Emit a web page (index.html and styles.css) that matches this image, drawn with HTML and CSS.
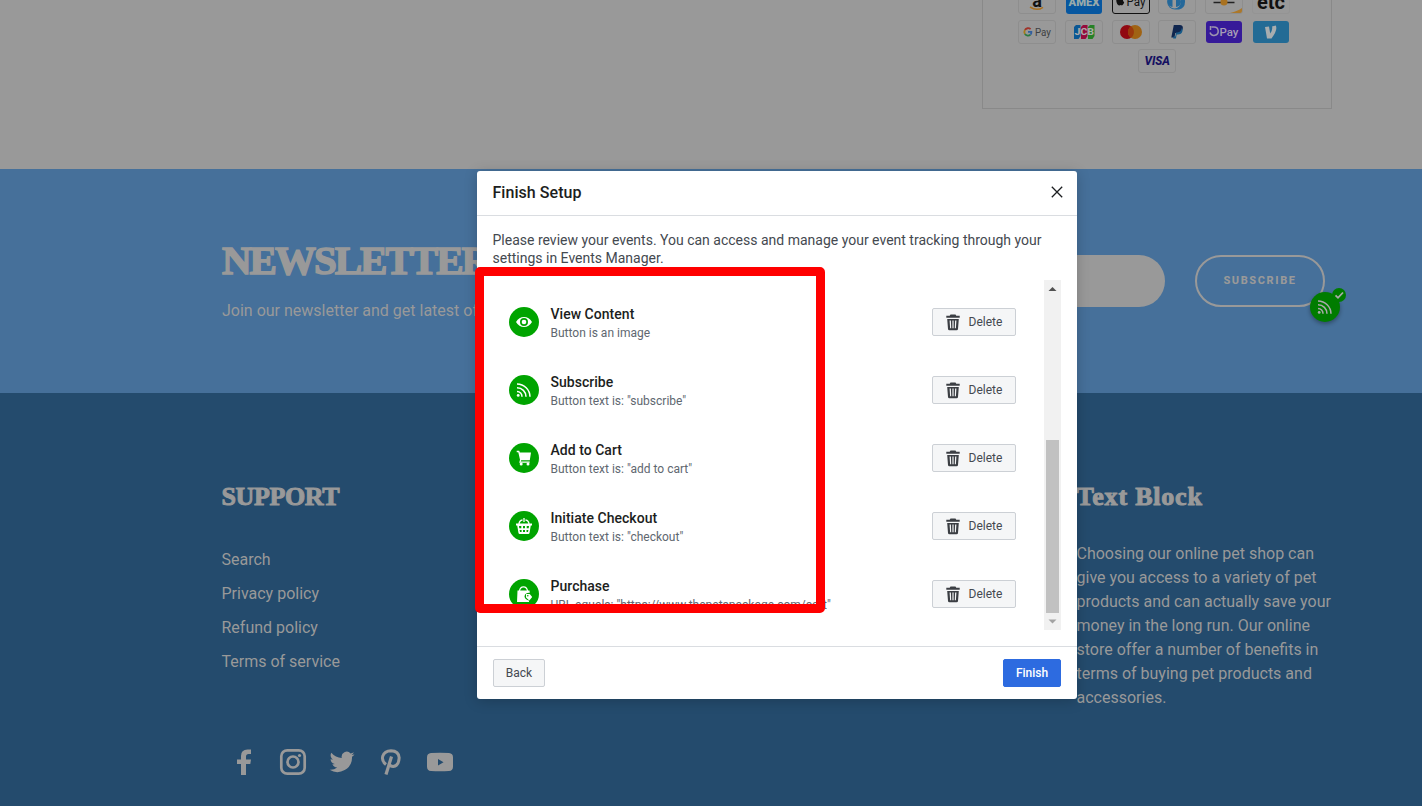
FILE: index.html
```html
<!DOCTYPE html>
<html lang="en">
<head>
<meta charset="utf-8">
<title>Finish Setup</title>
<link rel="stylesheet" href="styles.css">
</head>
<body>
<svg class="defs" aria-hidden="true">
  <symbol id="trash" viewBox="0 0 14 17"><path d="M4.500 .6h5l.8 1.200H13.700v1.900H.3V1.800h3.400z"/><path fill-rule="evenodd" d="M1.200 5h11.600l-.8 10a1.400 1.400 0 0 1-1.400 1.300H3.400A1.400 1.400 0 0 1 2 15zM3.600 6.500l.5 7.700h1.100l-.3-7.700zM6.400 6.500v7.700h1.200V6.500zM9.100 6.500l-.3 7.700h1.100l.5-7.700z"/></symbol>
  <symbol id="rss" viewBox="0 0 16 16"><circle cx="2.200" cy="13.400" r="1.400"/><g fill="none" stroke="currentColor" stroke-width="1.500"><path d="M1 9.500a5 5 0 0 1 5 5.300M1 5.700a9 9 0 0 1 9 9.100M1 1.900a13 13 0 0 1 13 12.900"/></g></symbol>
</svg>
<div class="page">
  <section class="cart">
    <div class="paybox">
      <div class="cards">
        <span class="card"><svg viewBox="0 0 38 24"><text x="19" y="17" text-anchor="middle" font-size="18" font-weight="700" fill="#111">a</text><path d="M12 17q7 4.500 13 .3" fill="none" stroke="#a9701f" stroke-width="1.500"/></svg></span>
        <span class="card amex"><svg viewBox="0 0 38 24"><text x="19" y="15.500" text-anchor="middle" font-size="10.500" font-weight="900" textLength="31" lengthAdjust="spacingAndGlyphs" fill="#9aa">AMEX</text></svg></span>
        <span class="card apple"><svg viewBox="0 0 38 24"><path d="M6 8c1-1 2 0 2.500 0S11 7 12 8.500c-1.500 1-1.300 3 .2 3.700C11.500 14.500 10 16 8.500 15c-1.500 1-3 0-3.700-2C3.700 10 4.500 8.500 6 8z" fill="#111"/><text x="14.500" y="16" font-size="12.500" textLength="19" lengthAdjust="spacingAndGlyphs" fill="#111">Pay</text></svg></span>
        <span class="card"><svg viewBox="0 0 38 24"><path d="M17 4h4a8 8 0 0 1 0 15.500h-4a7.500 7.500 0 0 1 0-15.500z" fill="#24689a"/><circle cx="16.500" cy="12" r="6.500" fill="#999"/><path d="M14.500 7v10a5 5 0 0 1 0-10zM18 7v10a5 5 0 0 0 0-10z" fill="#24689a"/></svg></span>
        <span class="card"><svg viewBox="0 0 38 24"><path d="M25 23q8-2 12-5v3q0 2-2 2z" fill="#ac782a"/><path d="M8.500 12.500h21" stroke="#222" stroke-width="1.500"/><circle cx="19" cy="12" r="3.500" fill="#a97221"/></svg></span>
        <span class="card bare"><svg viewBox="0 0 38 24"><text x="19" y="18.500" text-anchor="middle" font-size="20" font-weight="700" textLength="28" lengthAdjust="spacingAndGlyphs" fill="#111">etc</text></svg></span>
        <span class="card"><svg viewBox="0 0 38 24"><g fill="none" stroke-width="1.800"><path d="M12.600 9.200A3.700 3.700 0 0 0 6.900 10" stroke="#a03229"/><path d="M6.900 10a4 4 0 0 0 0 4" stroke="#a57b18"/><path d="M6.900 14a3.800 3.800 0 0 0 5.500.7" stroke="#2b7942"/><path d="M12.400 14.700q1.200-1.200 1-2.900H10" stroke="#315f9d"/></g><text x="17" y="15.700" font-size="11" textLength="16" lengthAdjust="spacingAndGlyphs" fill="#3d3f42">Pay</text></svg></span>
        <span class="card"><svg viewBox="0 0 38 24"><path d="M11 5h4.500v11l-2 3H9V7z" fill="#0b5794"/><path d="M18 5h4.500v11l-2 3H16V7z" fill="#950b3c"/><path d="M25 5h4.500v11l-2 3H23V7z" fill="#258126"/><text x="9.500" y="15" font-size="8.500" font-weight="800" textLength="19.500" lengthAdjust="spacingAndGlyphs" fill="#aaa">JCB</text></svg></span>
        <span class="card"><svg viewBox="0 0 38 24"><circle cx="15" cy="12" r="7" fill="#910912"/><circle cx="23" cy="12" r="7" fill="#a06313"/><path d="M19 6.300a7 7 0 0 1 0 11.400 7 7 0 0 1 0-11.400z" fill="#9b390d"/></svg></span>
        <span class="card"><svg viewBox="0 0 38 24"><path d="M15.800 5h6q3.500 0 3 3.500-.8 4.500-6 4.500h-1.500l-.8 4.500h-3.200z" fill="#10264f"/><path d="M23.800 8q1.200 1 .6 3.300-.9 3.200-4.500 3.200h-1.200l-.8 4h-2.800l.4-2h1.800l.8-4h1.500q3.300-.3 4.200-4.500z" fill="#185a88"/></svg></span>
        <span class="card shop"><svg viewBox="0 0 38 24"><path d="M6.500 7H9a4.200 4.200 0 1 1-4 5.500M5.500 6v4" fill="none" stroke="#9d94ae" stroke-width="1.500"/><text x="14.500" y="15.500" font-size="11.500" font-weight="500" textLength="19" lengthAdjust="spacingAndGlyphs" fill="#a69eb5">Pay</text></svg></span>
        <span class="card venmo"><svg viewBox="0 0 38 24"><path d="M13 7l4-.5 1.200 7Q21 9 20 6.400l3.800-.8Q26 10 19.500 18.500H15z" fill="#a8adaf"/></svg></span>
        <span class="card visa"><svg viewBox="0 0 38 24"><text x="6.500" y="16" font-size="12" font-weight="800" font-style="italic" textLength="25.500" lengthAdjust="spacingAndGlyphs" fill="#151061">VISA</text></svg></span>
      </div>
    </div>
  </section>

  <section class="newsletter">
    <div class="news-copy">
      <h1>NEWSLETTER</h1>
      <p>Join our newsletter and get latest offers</p>
    </div>
    <div class="email"></div>
    <div class="subscribe">SUBSCRIBE
      <span class="tracker"><svg><use href="#rss"/></svg><i><svg viewBox="0 0 14 14"><path d="M3.500 7.300l2.500 2.500 5-5.300" fill="none" stroke="currentColor" stroke-width="1.800"/></svg></i></span>
    </div>
  </section>

  <footer class="footer">
    <div class="support">
      <h2>SUPPORT</h2>
      <nav><a>Search</a><a>Privacy policy</a><a>Refund policy</a><a>Terms of service</a></nav>
      <div class="social">
        <svg viewBox="0 0 28 28"><path d="M11 27V16H7v-4.500h4V8q0-6.500 6.500-6.500H21V6h-2.500Q16 6 16 8.500v3h5l-.7 4.500H16v11z"/></svg>
        <svg viewBox="0 0 28 28"><g fill="none" stroke="currentColor" stroke-width="2.700"><rect x="2.300" y="2.300" width="23.400" height="23.400" rx="6"/><circle cx="14" cy="14" r="5.500"/></g><circle cx="20.500" cy="7.500" r="1.600"/></svg>
        <svg viewBox="0 0 28 28"><path d="M26.500 6.200q-1.400.7-2.900.9 1.600-1 2.200-2.800-1.500.9-3.200 1.200a5.100 5.100 0 0 0-8.800 4.600Q7.500 9.700 3.300 4.800a5.100 5.100 0 0 0 1.600 6.800q-1.300 0-2.300-.7a5.100 5.100 0 0 0 4.100 5.100q-1.200.3-2.300.1a5.100 5.100 0 0 0 4.800 3.500Q5.800 22.200 1.600 21.800A14.600 14.600 0 0 0 24 8.800q1.500-1.100 2.500-2.600z"/></svg>
        <svg viewBox="0 0 28 28"><path d="M9 16.500Q4.500 13 5.700 8.300 7.500 3 14 2.800q7.700.2 8.200 7-.4 8-6 8.800-3 0-4-2.400" fill="none" stroke="currentColor" stroke-width="3"/><path d="M14.500 8.500L9 26.500" fill="none" stroke="currentColor" stroke-width="3.200"/></svg>
        <svg viewBox="0 0 28 28"><path fill-rule="evenodd" d="M5 5q9-.7 18 0 4 .3 4 4.300v9.400q0 4-4 4.300-9 .7-18 0-4-.3-4-4.300V9.300Q1 5.300 5 5zm7 6v6.500l5.500-3.200z"/></svg>
      </div>
    </div>
    <div class="textblock">
      <h2>Text Block</h2>
      <p>Choosing our online pet shop can<br>give you access to a variety of pet<br>products and can actually save your<br>money in the long run. Our online<br>store offer a number of benefits in<br>terms of buying pet products and<br>accessories.</p>
    </div>
  </footer>

  <div class="modal">
    <header><h3>Finish Setup</h3><svg class="close" viewBox="0 0 12 12"><path d="M.8.8l10.400 10.400M11.200.8L.8 11.200" stroke="currentColor" stroke-width="1.300"/></svg></header>
    <div class="body">
      <p class="intro">Please review your events. You can access and manage your event tracking through your<br>settings in Events Manager.</p>
      <div class="scroller">
        <div class="list">
          <div class="event"><span class="dot"><svg viewBox="0 0 16 16"><path fill-rule="evenodd" d="M0 8q3-5 8-5t8 5q-3 5-8 5T0 8zm8-4a4 4 0 1 0 0 8 4 4 0 0 0 0-8z"/><circle cx="8" cy="8" r="2.300"/></svg></span><div class="label"><b>View Content</b><span>Button is an image</span></div><button><svg><use href="#trash"/></svg>Delete</button></div>
          <div class="event"><span class="dot"><svg><use href="#rss"/></svg></span><div class="label"><b>Subscribe</b><span>Button text is: "subscribe"</span></div><button><svg><use href="#trash"/></svg>Delete</button></div>
          <div class="event"><span class="dot"><svg viewBox="0 0 16 16"><path d="M.7.8h2.500l.7 1.700H15l-1.200 7.700H5.200l-.5 1.200h9v1.300H3.200L4 9.800 2.300 2.200H.7z"/><circle cx="5.200" cy="13.900" r="1.500"/><circle cx="12" cy="13.900" r="1.500"/></svg></span><div class="label"><b>Add to Cart</b><span>Button text is: "add to cart"</span></div><button><svg><use href="#trash"/></svg>Delete</button></div>
          <div class="event"><span class="dot"><svg viewBox="0 0 16 16"><path d="M8 0v4M3 6q.3-3.500 3.500-4M13 6q-.3-3.500-3.500-4" fill="none" stroke="currentColor" stroke-width="1.300"/><path fill-rule="evenodd" d="M0 5.500h16v2h-1.200L13.500 15q-.2 1-1.200 1H3.700q-1 0-1.200-1L1.200 7.500H0zM3 8l.3 2.300h2V8zm4 0v2.300h2V8zm3.700 0v2.300h2L13 8zM3.600 12l.4 2h1.600v-2zM7 12v2h2v-2zm3.500 0v2H12l.4-2z"/></svg></span><div class="label"><b>Initiate Checkout</b><span>Button text is: "checkout"</span></div><button><svg><use href="#trash"/></svg>Delete</button></div>
          <div class="event"><span class="dot"><svg viewBox="0 0 16 16"><path d="M3.500 5Q4 .8 7.500 .8T11.500 5" fill="none" stroke="currentColor" stroke-width="1.300"/><path d="M1.500 4.500h12l.3 2.300Q9 6.500 8.500 10.500q.5 3 4.500 4V16H1z"/><path d="M10 8h3.700l2.600 3-3 3.500-3.300-3z"/><circle cx="11.800" cy="9.800" r=".8" fill="#00a400"/></svg></span><div class="label"><b>Purchase</b><span>URL equals: "https://www.thepetspackage.com/cart"</span></div><button><svg><use href="#trash"/></svg>Delete</button></div>
        </div>
        <div class="bar"><svg viewBox="0 0 17 17"><path d="M4.500 11h8l-4-4z" fill="#505050"/></svg><i></i><svg viewBox="0 0 17 17"><path d="M4.500 6.500h8l-4 4z" fill="#a3a3a3"/></svg></div>
      </div>
    </div>
    <div class="actions"><button>Back</button><button class="primary">Finish</button></div>
  </div>
  <div class="highlight"></div>
</div>
</body>
</html>
```
FILE: styles.css
```css
* { box-sizing: border-box; }
body { margin: 0; font-family: Roboto, sans-serif; }
h1, h2, h3, p { margin: 0; }
svg { display: block; fill: currentColor; }
.defs { position: absolute; width: 0; height: 0; }
.page { position: relative; width: 1422px; height: 806px; overflow: hidden; background: #999; color: #999; }

.cart { height: 169px; padding: 0 90px 0 982px; }
.paybox { height: 109px; border: 1px solid #898989; border-top: 0; overflow: hidden; }
.cards { display: flex; flex-wrap: wrap; justify-content: center; gap: 5.500px 8.900px; width: 290px; margin: -10px auto 0 26px; }
.card { width: 38px; height: 24px; border: 1px solid #8e8e8e; border-radius: 3px; }
.card svg { width: 38px; height: 24px; margin: -1px; overflow: visible; }
.amex { background: #0757a0; border: 0; width: 36px; margin: 0 1px; }
.apple { border-color: #111; }
.bare { border-color: #949494; }
.shop { background: #361a99; }
.venmo { background: #236b95; }
.shop, .venmo { border: 0; width: 36px; height: 22px; margin: 1px; }
.amex svg { margin-top: 0; }
.visa { margin-left: 5px; }

.newsletter { display: flex; height: 224px; padding: 86px 97px 0 222px; background: #46709a; }
.news-copy { width: 498px; margin-top: -18px; white-space: nowrap; }
h1, h2 { font-family: "Liberation Serif", serif; font-weight: 700; -webkit-text-stroke: 1.600px #999; }
h1 { font-size: 41px; line-height: 47px; letter-spacing: -2px; }
.news-copy p { margin-top: 15px; font-size: 16px; line-height: 24px; }
.email { width: 445px; height: 52px; border-radius: 0 26px 26px 0; background: #999; }
.subscribe { position: relative; flex: none; width: 130px; height: 52px; margin-left: 30px; border: 2px solid #999; border-radius: 26px; font-size: 11px; font-weight: 800; line-height: 47px; letter-spacing: 1.600px; text-align: center; }
.tracker { position: absolute; left: 113px; top: 35px; width: 30px; height: 30px; border-radius: 50%; background: #007c00; box-shadow: 0 2px 4px #0005; color: #aaa; }
.tracker > svg { width: 16px; height: 16px; margin: 7px; }
.tracker i { position: absolute; right: -6px; top: -4px; width: 14px; height: 14px; border-radius: 50%; background: #007c00; }

.footer { display: flex; height: 413px; padding: 89px 0 0 221.500px; background: #244b6d; }
.support { width: 855px; }
h2 { font-size: 26px; line-height: 30px; -webkit-text-stroke-width: 1px; }
.support h2 { letter-spacing: -.4px; }
.support nav { display: flex; flex-direction: column; gap: 10px; margin-top: 36px; font-size: 16px; line-height: 24px; }
.social { display: flex; gap: 21px; margin: 74px 0 0 8.500px; }
.social svg { width: 28px; height: 28px; }
.textblock h2 { letter-spacing: .8px; }
.textblock p { margin-top: 30px; font-size: 16px; line-height: 24px; white-space: nowrap; }

.modal { position: absolute; left: 477px; top: 171px; width: 600px; height: 528px; display: flex; flex-direction: column; border-radius: 3px; background: #fff; color: #444950; box-shadow: 0 2px 14px #0003; }
.modal header { display: flex; align-items: center; justify-content: space-between; height: 45px; padding: 0 14px 2px 15.500px; border-bottom: 1px solid #dadde1; color: #1c1e21; }
h3 { padding-top: 2px; font-size: 16px; line-height: 20px; font-weight: 500; letter-spacing: .05px; }
.close { width: 12px; height: 12px; }
.body { flex: 1; padding: 15px 16px 0 15.500px; }
.intro { font-size: 14px; line-height: 18px; white-space: nowrap; }
.scroller { display: flex; height: 350px; margin-top: 13px; }
.list { flex: 1; padding: 8px 28px 0 16px; overflow: hidden; }
.event { display: flex; align-items: center; height: 68px; }
.dot { display: grid; place-items: center; flex: none; width: 30px; height: 30px; border-radius: 50%; background: #00a400; color: #fff; }
.dot svg { width: 16px; height: 16px; }
.label { flex: 1; display: flex; flex-direction: column; margin-left: 12px; padding-top: 2px; font-size: 12px; line-height: 18px; color: #606770; white-space: nowrap; }
.label b { font-size: 14px; line-height: 20px; font-weight: 500; letter-spacing: .03px; color: #1c1e21; }
button { display: flex; align-items: center; justify-content: center; height: 28px; padding: 0 12px; border: 1px solid #ccd0d5; border-radius: 2px; background: #f5f6f7; color: #444950; font: 12px/26px Roboto, sans-serif; }
.event button { width: 84px; flex: none; gap: 9px; }
.event button svg { width: 14px; height: 17px; color: #3b3e43; }
.bar { display: flex; flex-direction: column; justify-content: space-between; align-items: center; width: 17px; background: #f1f1f1; }
.bar svg { width: 17px; height: 17px; }
.bar i { width: 13px; height: 173px; margin-top: auto; background: #c1c1c1; }
.actions { display: flex; justify-content: space-between; height: 53px; padding: 12px 16px; border-top: 1px solid #dadde1; }
.actions button { width: 52px; }
.actions .primary { width: 58px; border-color: #2d6be0; background: #2d6be0; color: #fff; font-weight: 500; }
.highlight { position: absolute; left: 475px; top: 267px; width: 350px; height: 346px; border: 9px solid #f00; border-radius: 5px; }
```
